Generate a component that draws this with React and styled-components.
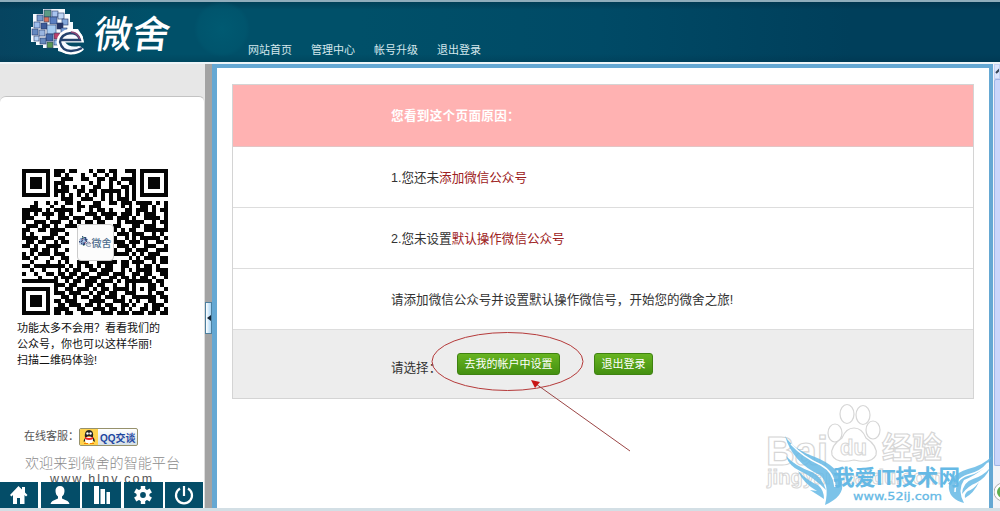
import React from 'react';
import styled, { createGlobalStyle } from 'styled-components';

const GlobalStyle = createGlobalStyle`
    * {
        box-sizing: border-box;
    }

    body {
        margin: 0;
        overflow: hidden;
        font-family: 'Liberation Sans', 'Noto Sans CJK SC', sans-serif;
        font-size: 11px;
        color: #333;
        background: #fff;
    }
`;

const Page = styled.div`
    position: relative;
    display: flex;
    flex-direction: column;
    width: 1000px;
    height: 511px;
    overflow: hidden;
    border-bottom: 3px solid #d3dfe5;
`;

const Header = styled.header`
    display: flex;
    flex: none;
    height: 64px;
    border-top: 2px solid #8fadbb;
    border-bottom: 2px solid #eef5f8;
    background:
        radial-gradient(circle at 222px 27px, rgba(0, 105, 127, 0.4) 0, rgba(0, 95, 118, 0.3) 24px, transparent 28px),
        linear-gradient(to bottom, rgba(0, 35, 55, 0.35) 0, transparent 8px, transparent 52px, rgba(0, 35, 55, 0.2)),
        linear-gradient(to right, #064460 0, #005069 150px, #005069 360px, #004a66 600px, #003f5b 850px);
`;

const Brand = styled.div`
    display: flex;
    width: 248px;
    padding: 6px 0 0 30px;
`;

const BrandName = styled.div`
    margin-left: 5px;
    margin-top: 4px;
    color: #fff;
    font-size: 38px;
    font-weight: 500;
    line-height: 46px;
    transform: skewX(-7deg);
    transform-origin: bottom;
`;

const Nav = styled.nav`
    display: flex;
    gap: 19px;
    padding-top: 40px;
    line-height: 16px;
    color: #d5e8ed;
    white-space: nowrap;
`;

const NavLink = styled.a`
    width: 44px;
`;

const Body = styled.div`
    display: flex;
    flex: 1;
    min-height: 0;
`;

const Sidebar = styled.aside`
    display: flex;
    flex-direction: column;
    width: 205px;
    padding-top: 32px;
    background: #e7e7e7;
`;

const SidePanel = styled.div`
    display: flex;
    flex: 1;
    flex-direction: column;
    min-height: 0;
    border-top: 1px solid #c3c3c3;
    border-right: 1px solid #ddd;
    border-radius: 6px 6px 0 0;
    background: #fff;
`;

const QrBox = styled.div`
    display: grid;
    width: 146px;
    height: 146px;
    margin: 72px 0 0 22px;
    place-items: center;

    > * {
        grid-area: 1 / 1;
    }
`;

const QrBadge = styled.div`
    display: flex;
    align-items: center;
    justify-content: center;
    width: 37px;
    height: 37px;
    border: 1px solid #ccc;
    border-radius: 4px;
    background: #fcfcfc;
    color: #4c6b8c;
    font-size: 10px;
    font-weight: 500;
    white-space: nowrap;
`;

const Blurb = styled.p`
    margin: 5px 0 0 17px;
    color: #111;
    line-height: 16px;
    white-space: nowrap;
`;

const Service = styled.div`
    display: flex;
    align-items: center;
    height: 20px;
    margin: 59px 0 0 24px;
    color: #555;
    white-space: nowrap;
`;

const ServiceLabel = styled.span`
    width: 55px;
    margin-top: -5px;
`;

const QqButton = styled.span`
    display: flex;
    align-items: center;
    width: 59px;
    height: 18px;
    border: 1px solid #96916c;
    border-radius: 2px;
    background: linear-gradient(#fff, #d4dfe6);
    color: #1d46a0;
    font-size: 10px;
    font-weight: bold;
    overflow: hidden;
`;

const QqIcon = styled.svg`
    flex: none;
    margin-right: 2px;
    background: #ffd34d;
`;

const Welcome = styled.div`
    margin: 5px 0 0 25px;
    color: #8c8c8c;
    font-size: 14.1px;
    font-weight: 300;
    line-height: 22px;
    white-space: nowrap;
`;

const Site = styled.div`
    height: 14px;
    margin: -2px 0 -4px 50px;
    color: #555;
    font-size: 12.5px;
    letter-spacing: 2.1px;
    line-height: 14px;
`;

const Toolbar = styled.div`
    position: relative;
    display: grid;
    grid-template-columns: 38px 39px 39px 39px 38px;
    column-gap: 2.6px;
    height: 26px;
    margin-top: auto;
    background: #fff;
`;

const Tool = styled.div`
    display: flex;
    align-items: center;
    justify-content: center;
    background: #044d68;
`;

const Splitter = styled.div`
    display: flex;
    align-items: center;
    width: 7px;
    padding-top: 64px;
    background: #a3a3a3;
`;

const SplitHandle = styled.div`
    display: flex;
    align-items: center;
    justify-content: center;
    width: 7px;
    height: 32px;
    border: 1px solid #4d7f9e;
    background: linear-gradient(to right, #fff, #a8d5f5);
`;

const Main = styled.main`
    width: 781px;
    padding: 16px 15px 0 15px;
    border: 5px solid #65a8d3;
    border-top-width: 4px;
    border-right-width: 4px;
    border-bottom: 0;
    background: #fff;
`;

const Reasons = styled.div`
    width: 742px;
    height: 315px;
    border: 1px solid #d4d4d4;
    font-size: 12.55px;
`;

const Row = styled.div`
    display: flex;
    align-items: center;
    height: ${({ $height }) => $height || 61}px;
    padding: 0 0 2px 158px;
    border-bottom: 1px solid #ddd;
    white-space: nowrap;
`;

const TitleRow = styled(Row)`
    background: #ffb2b2;
    color: #fff;
    font-weight: bold;
    letter-spacing: 0.35px;
    border-bottom-color: #e4c4c4;
`;

const ActionRow = styled(Row)`
    padding-bottom: 0;
    background: #ededed;
    border-bottom: 0;
`;

const Highlight = styled.span`
    color: #9c2020;
`;

const ChoiceLabel = styled.span`
    width: 66px;
    padding-top: 4px;
`;

const GreenButton = styled.button`
    width: ${({ $width }) => $width}px;
    height: 22px;
    margin: 0 34px 0 0;
    padding: 0 0 2px;
    border: 1px solid #3f8211;
    border-radius: 3px;
    background: linear-gradient(#67b421, #449010);
    color: #fff;
    font: inherit;
    font-size: 11px;
    white-space: nowrap;
`;

const Scrollbar = styled.div`
    display: flex;
    flex-direction: column;
    width: 7px;
    padding-left: 1px;
    background: #f3f4f8;
`;

const ScrollArrow = styled.div`
    height: 15px;
    border: 1px solid #c4d2f3;
    background: #dce6fd;
    overflow: hidden;
`;

const ScrollThumb = styled.div`
    height: 387px;
    border: 1px solid #9fb4e5;
    border-right: 0;
    border-radius: 2px 0 0 2px;
    background: #cad6fb;
`;

const Annotation = styled.svg`
    position: absolute;
    top: 320px;
    left: 420px;
`;

const Watermark = styled.svg`
    position: absolute;
    top: 398px;
    left: 760px;
`;

const QR_ROWS = [
    '1111111011101100010110110011101111111',
    '1000001011010001001001010000101000001',
    '1011101000111001100110110111101011101',
    '1011101011100000010100101001101011101',
    '1011101010110101001100100110101011101',
    '1000001011110011011011111010101000001',
    '1111111010101010101010101010101111111',
    '0000000000111001110010101110100000000',
    '0001001010011010001100110111011110101',
    '0011000100100011011100000101001101001',
    '1111101011111010010110100011011101011',
    '1101011101101000111011110111010111001',
    '1110001001110111001101101110100111101',
    '1001110111001010110110001011111001011',
    '0111011010011100100011011000110111001',
    '1100110111100000000000010101100111111',
    '1010000110010000000000001110111001010',
    '1111011101100000000000110010101111101',
    '0110110010110000000000011101110100110',
    '1101001111000000000000101110100111001',
    '0011011010010000000000010011011100111',
    '1010111011100000000000111110101011100',
    '1101000100110000000000100001010111011',
    '0010001001010011100111110110111001011',
    '1101111111101010110101100110010110100',
    '0010010001010110011011100101011110111',
    '1001001101101101100111011100110110011',
    '0000100010111011011100110110101101001',
    '1111111110010110111011101011111110110',
    '0000000011101100110110010010100011010',
    '1111111010011011101011011110101011001',
    '1000001011101110010110110011100010110',
    '1011101000110101101101110100111111011',
    '1011101011011100011110011101010011001',
    '1011101001101110110101100110100101110',
    '1000001011110011001110110101001101101',
    '1111111011011001110011101110111011011',
];

const QR_PATH = QR_ROWS.map((row, y) => row.split('').map((cell, x) => (
    cell === '1' ? `M${x} ${y}h1v1h-1z` : ''
)).join('')).join('');

// x, y, size, colour of the mosaic squares in the logo
const TILES = [
    [14, 2, 7, '#5b9b85'], [22, 3, 6, '#a9c4ef'], [7, 7, 6, '#7798cb'],
    [14, 9, 5, '#d8755c'], [20, 9, 7, '#5b7fc0'], [28, 5, 6, '#c1d7f5'],
    [32, 11, 6, '#85a9dc'], [4, 14, 6, '#9dbdec'], [11, 15, 6, '#3d5c9b'],
    [17, 17, 9, '#a5caf0'], [27, 15, 6, '#263566'], [2, 21, 6, '#6488c0'],
    [9, 22, 6, '#99b5df'], [16, 26, 7, '#4268a8'], [24, 25, 6, '#bd416b'],
    [31, 20, 6, '#749bd4'], [4, 28, 5, '#b8d3f5'], [10, 30, 6, '#6689bd'],
    [17, 34, 6, '#5a9855'], [24, 32, 5, '#91b8e8'],
];

const Logo = ({ width = 56, height = 48 }) => (
    <svg width={width} height={height} viewBox="0 0 56 48">
        <path d="M13 1H35V6H40V14H43V21H48L53 29V34H35Q39 40 49 38L54 41Q48 47 38 46L28 43V40H20L13 40V37H6V34H1V19H3V6H13Z" fill="#f5faff" />
        {TILES.map(([x, y, size, fill]) => (
            <rect key={`${x}-${y}`} x={x} y={y} width={size} height={size} fill={fill} stroke="#263b69" strokeWidth=".6" />
        ))}
        <path d="M31 32H51Q49 23 40 23Q30 25 29 34Q31 44 41 44Q48 44 52 40" fill="none" stroke="#fff" strokeWidth="5" />
        <path d="M31 32H50Q48 25 41 25Q31 26 30 34Q32 43 41 43Q47 43 52 40" fill="none" stroke="#24426d" strokeWidth="2.3" />
        <path d="M41 24Q47 24 50 31" fill="none" stroke="#8e4775" strokeWidth="1.5" />
    </svg>
);

const HomeIcon = () => (
    <svg width="20" height="20" viewBox="0 0 20 20" fill="#fff">
        <path d="M9.500 1L1 10l1.500 1.500L4 10v9h4v-6h3v6h4.500v-9l1.500 1.500L18.500 10 16 7.500V2h-3v2.500z" />
    </svg>
);

const UserIcon = () => (
    <svg width="20" height="20" viewBox="0 0 20 20" fill="#fff">
        <path d="M10 1c-3 0-4.700 2-4.500 5 .1 2.700 1 4.500 2.500 5.500v2L2.500 16Q1 17 .5 19h19q-.5-2-2-3L12 13.500v-2c1.500-1 2.400-2.800 2.500-5.500C14.700 3 13 1 10 1z" />
    </svg>
);

const BarsIcon = () => (
    <svg width="20" height="20" viewBox="0 0 20 20" fill="#fff">
        <path d="M2 1h5v18H2zM8.500 4h4.500v15H8.500zM14.500 7H18v12h-3.500z" />
    </svg>
);

const GearIcon = () => (
    <svg width="20" height="20" viewBox="0 0 20 20">
        <g fill="#fff">
            {[0, 60, 120].map((angle) => (
                <rect key={angle} x="7.800" y="1" width="4.400" height="18" transform={`rotate(${angle} 10 10)`} />
            ))}
            <circle cx="10" cy="10" r="6.500" />
        </g>
        <circle cx="10" cy="10" r="2.900" fill="#044d68" />
    </svg>
);

const PowerIcon = () => (
    <svg width="20" height="20" viewBox="0 0 20 20" fill="none" stroke="#fff" strokeWidth="2.200">
        <path d="M6 3.500A8 8 0 1 0 14 3.500M10 1v10" />
    </svg>
);

const tools = [HomeIcon, UserIcon, BarsIcon, GearIcon, PowerIcon];

function App() {
    return (
        <Page>
            <GlobalStyle />
            <Header>
                <Brand>
                    <Logo />
                    <BrandName>微舍</BrandName>
                </Brand>
                <Nav>
                    <NavLink>网站首页</NavLink>
                    <NavLink>管理中心</NavLink>
                    <NavLink>帐号升级</NavLink>
                    <NavLink>退出登录</NavLink>
                </Nav>
            </Header>

            <Body>
                <Sidebar>
                    <SidePanel>
                        <QrBox>
                            <svg width="146" height="146" viewBox="0 0 37 37" shapeRendering="crispEdges">
                                <path d={QR_PATH} fill="#050505" />
                            </svg>
                            <QrBadge><Logo width={13} height={12} />微舍</QrBadge>
                        </QrBox>
                        <Blurb>
                            功能太多不会用？看看我们的<br />
                            公众号，你也可以这样华丽!<br />
                            扫描二维码体验!
                        </Blurb>
                        <Service>
                            <ServiceLabel>在线客服：</ServiceLabel>
                            <QqButton>
                                <QqIcon width="18" height="16" viewBox="0 0 18 16">
                                    <path d="M5 9Q3 12 4 13L6 11Q9 15 12 11L15 13Q15 10 13 8Q14 1 9 1T5 9Z" fill="#222" />
                                    <ellipse cx="9" cy="11" rx="4" ry="3.500" fill="#fff" />
                                    <path d="M5 8Q9 10 13 8V10Q9 12 5 10Z" fill="#e22" />
                                    <circle cx="7.500" cy="4.500" r="1.200" fill="#fff" />
                                    <circle cx="10.500" cy="4.500" r="1.200" fill="#fff" />
                                    <path d="M7 7H11L9 8ZM4 14H8V15H4ZM10 14H14V15H10Z" fill="#f57c00" />
                                </QqIcon>
                                QQ交谈
                            </QqButton>
                        </Service>
                        <Welcome>欢迎来到微舍的智能平台</Welcome>
                        <Site>www.hlnv.com</Site>
                        <Toolbar>
                            {tools.map((Icon, index) => (
                                <Tool key={index}><Icon /></Tool>
                            ))}
                        </Toolbar>
                    </SidePanel>
                </Sidebar>

                <Splitter>
                    <SplitHandle>
                        <svg width="4" height="6" viewBox="0 0 4 6"><path d="M4 0V6L0 3Z" fill="#123" /></svg>
                    </SplitHandle>
                </Splitter>

                <Main>
                    <Reasons>
                        <TitleRow $height={62}>您看到这个页面原因：</TitleRow>
                        <Row>1.您还未<Highlight>添加微信公众号</Highlight></Row>
                        <Row>2.您未设置<Highlight>默认操作微信公众号</Highlight></Row>
                        <Row>请添加微信公众号并设置默认操作微信号，开始您的微舍之旅!</Row>
                        <ActionRow $height={68}>
                            <ChoiceLabel>请选择：</ChoiceLabel>
                            <GreenButton $width={103}>去我的帐户中设置</GreenButton>
                            <GreenButton $width={59}>退出登录</GreenButton>
                        </ActionRow>
                    </Reasons>
                </Main>

                <Scrollbar>
                    <ScrollArrow>
                        <svg width="7" height="12" viewBox="0 0 7 12"><path d="M1 8L5 4L9 8" fill="none" stroke="#345" strokeWidth="2" /></svg>
                    </ScrollArrow>
                    <ScrollThumb />
                    <svg width="6" height="42" viewBox="0 0 6 42">
                        <circle cx="9" cy="26" r="9" fill="#fff" stroke="#aaa" />
                        <circle cx="9" cy="26" r="6" fill="#5fae50" />
                    </svg>
                </Scrollbar>
            </Body>

            <Annotation width="220" height="140" viewBox="0 0 220 140" fill="none">
                <ellipse cx="87.500" cy="41.500" rx="75.500" ry="29" stroke="#b53a3a" />
                <path d="M210 131L116 64" stroke="#9b4545" />
                <path d="M111 60L120 62L115 68Z" fill="#c91616" />
            </Annotation>

            <Watermark width="240" height="110" viewBox="0 0 240 110">
                <g fill="#fff" stroke="#d6d6d6" strokeWidth="1.200" fontFamily="Liberation Sans, Noto Sans CJK SC, sans-serif" fontWeight="bold">
                    <text x="6" y="67" fontSize="41" textLength="62" lengthAdjust="spacingAndGlyphs">Bai</text>
                    <ellipse cx="75" cy="35" rx="7" ry="9" />
                    <ellipse cx="87" cy="16" rx="7" ry="9.500" />
                    <ellipse cx="103" cy="17" rx="7" ry="9.500" />
                    <ellipse cx="113" cy="32" rx="7" ry="9" />
                    <path d="M94 30Q102 30 106 40Q118 48 116 57Q112 66 94 62Q76 66 72 57Q70 48 82 40Q86 30 94 30Z" />
                    <text x="80" y="57" fontSize="22" strokeWidth="1">du</text>
                    <text x="122" y="60" fontSize="30" textLength="60">经验</text>
                    <text x="7" y="86" fontSize="20" textLength="176" lengthAdjust="spacingAndGlyphs" strokeWidth="1">jingyan.baidu.com</text>
                </g>
                <g fill="#65b9e5" fillOpacity=".85">
                    <path d="M25 38Q33 51 55 59Q78 68 82 84Q85 98 65 107Q70 86 60 77Q33 65 25 38Z" />
                    <path d="M26 58Q35 68 52 74Q62 79 66 92Q52 78 40 73Q29 68 26 58Z" />
                    <path d="M38 73Q48 83 58 87Q64 92 64 101Q58 97 50 92L57 93Q43 85 38 73Z" />
                    <path d="M232 58Q224 67 208 71Q187 78 189 91Q190 101 204 105Q197 92 204 82Q226 73 232 58Z" />
                    <path d="M230 70Q223 78 213 81Q203 84 202 96Q208 88 216 85Q226 80 230 70ZM219 84Q213 92 208 93Q204 96 205 100Q214 95 219 84Z" />
                </g>
                <path d="M31 46Q43 59 61 67Q74 74 75 89M228 65Q221 74 208 77Q195 81 195 94" fill="none" stroke="#fff" strokeWidth="1.500" />
                <g fill="#65b9e5" fontFamily="Liberation Sans, Noto Sans CJK SC, sans-serif" fontWeight="bold">
                    <text x="73" y="87" fontSize="22" textLength="127" lengthAdjust="spacingAndGlyphs">我爱IT技术网</text>
                    <text x="93" y="102" fontSize="11" textLength="89" lengthAdjust="spacingAndGlyphs" fontFamily="DejaVu Sans, sans-serif" fontWeight="normal" stroke="#65b9e5" strokeWidth=".3">www.52ij.com</text>
                </g>
            </Watermark>
        </Page>
    );
}

export default App;
